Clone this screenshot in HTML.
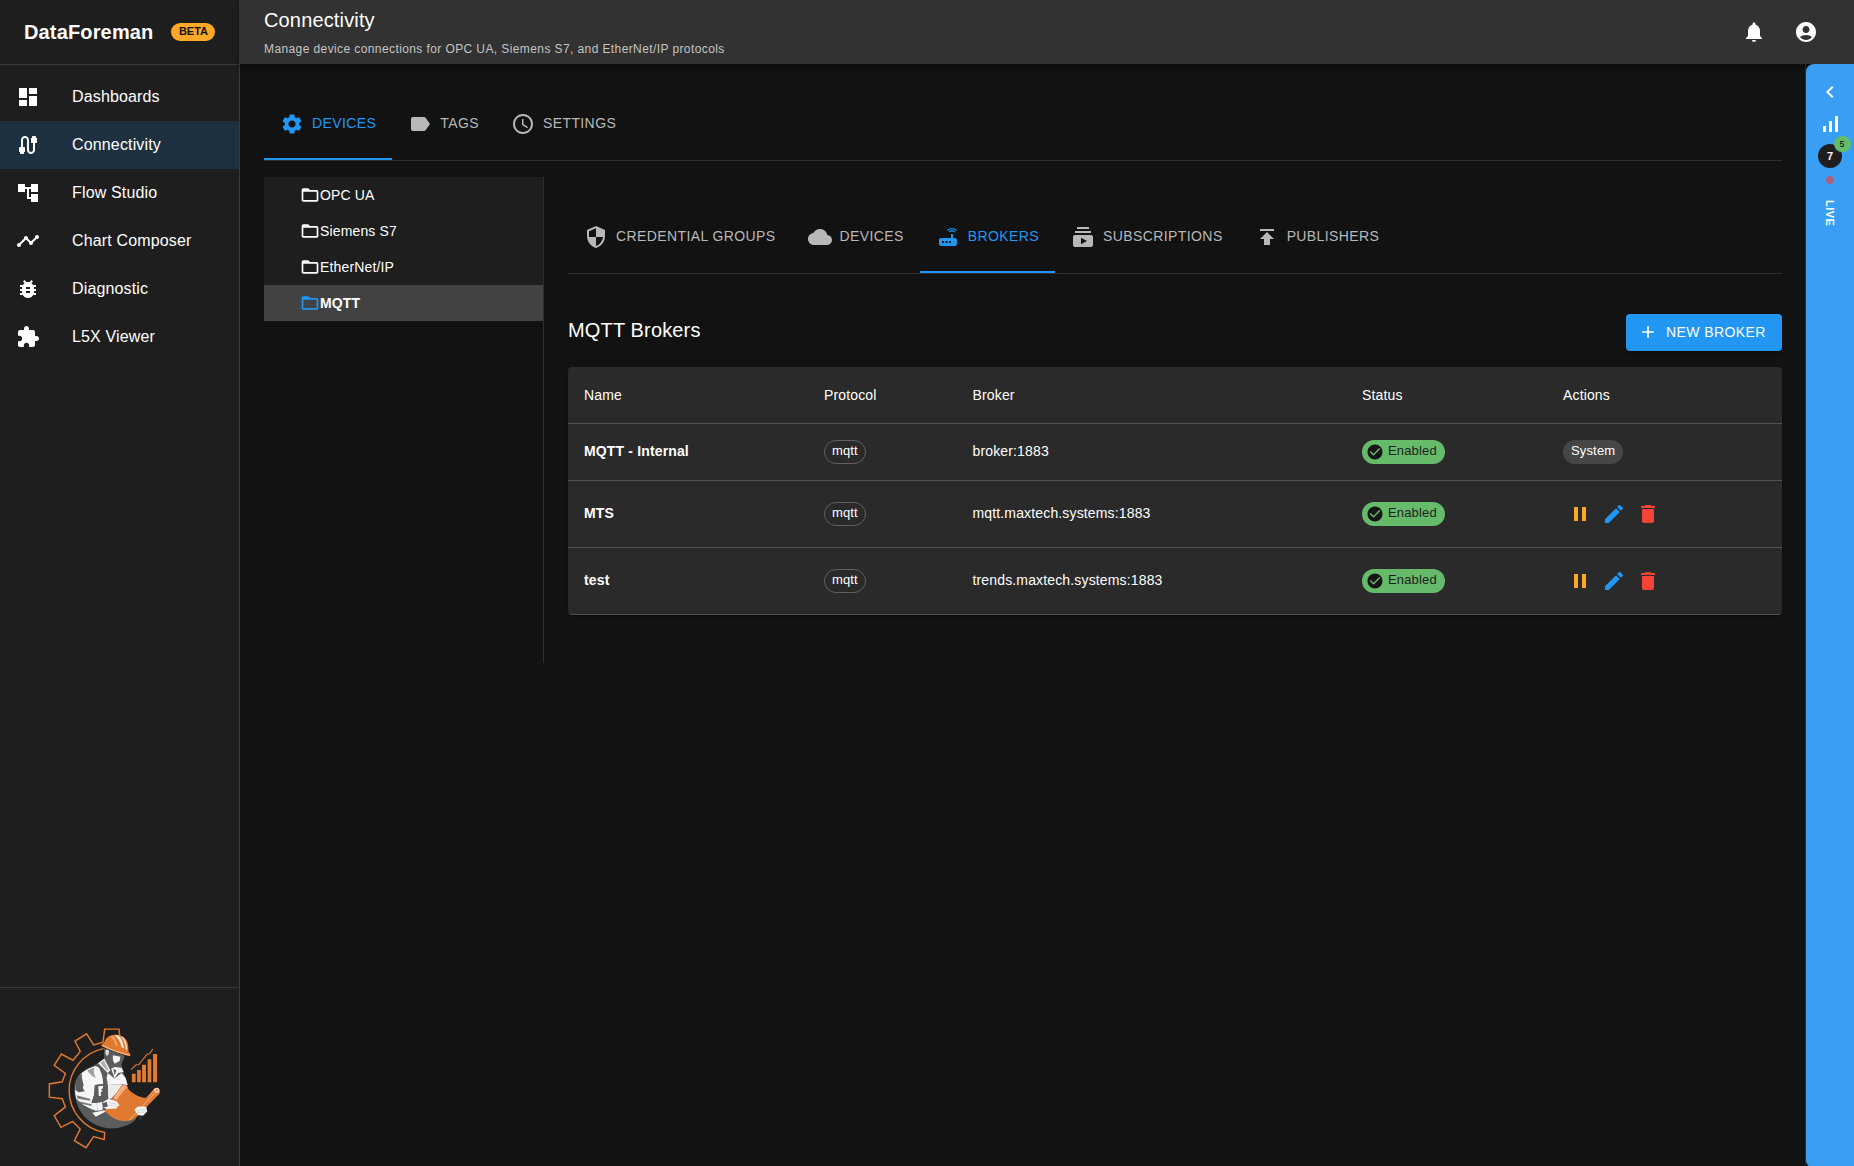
<!DOCTYPE html>
<html><head><meta charset="utf-8">
<style>
*{box-sizing:border-box;margin:0;padding:0}
html,body{width:1854px;height:1166px;overflow:hidden;background:#121212;font-family:"Liberation Sans",sans-serif;color:#fff}
svg{display:block}
.abs{position:absolute}
#side{position:absolute;left:0;top:0;width:240px;height:1166px;background:#1e1e1e;border-right:1px solid #393939}
#side .hdr{position:absolute;left:0;top:0;width:239px;height:65px;border-bottom:1px solid #393939}
#brand{position:absolute;left:24px;top:20px;font-size:20px;font-weight:700;line-height:24px;letter-spacing:0.15px}
#beta{position:absolute;left:171px;top:23px;width:44px;height:18px;border-radius:9px;background:#ffa726;color:#111;font-size:11px;font-weight:700;line-height:16px;text-align:center;padding-left:1px}
.nav{position:absolute;left:0;width:239px;height:48px}
.nav.sel{background:#1e3140}
.nav svg{position:absolute;left:16px;top:12px;width:24px;height:24px;fill:#fff}
.nav span{position:absolute;left:72px;top:12px;font-size:16px;line-height:24px;letter-spacing:0.15px}
#sidefoot{position:absolute;left:0;top:987px;width:239px;height:1px;background:#393939}
#bar{position:absolute;left:240px;top:0;width:1614px;height:64px;background:#323232;box-shadow:0 2px 4px -1px rgba(0,0,0,.2),0 4px 5px 0 rgba(0,0,0,.14),0 1px 10px 0 rgba(0,0,0,.12)}
#bar h1{position:absolute;left:24px;top:8px;font-size:20px;font-weight:400;line-height:24px;letter-spacing:0.15px}
#bar p{position:absolute;left:24px;top:41px;font-size:12px;line-height:16px;color:#c4c4c4;letter-spacing:0.4px}
#bar svg{position:absolute;width:24px;height:24px;fill:#fff}
#live{position:absolute;left:1806px;top:64px;width:48px;height:1104px;background:#399ff4;border-radius:8px 0 0 8px}
#livel{position:absolute;left:1805px;top:64px;width:1px;height:1102px;background:#2c2c2c}
.tab{position:absolute;height:72px;font-size:14px;letter-spacing:0.02857em;color:#b8b8b8;text-transform:uppercase}
.tab svg{position:absolute;width:24px;height:24px;fill:#b8b8b8}
.tab span{position:absolute;white-space:nowrap;line-height:24px}
.tab.on{color:#2196f3}.tab.on svg{fill:#2196f3}
.hr{position:absolute;height:1px;background:#2e2e2e}
.ind{position:absolute;height:2px;background:#2196f3}
#tree{position:absolute;left:264px;top:177px;width:279px;height:144px;background:#1e1e1e}
.ti{position:absolute;left:0;width:279px;height:36px}
.ti.sel{background:#424242;font-weight:700}
.ti svg{position:absolute;left:36px;top:8px;width:20px;height:20px;fill:#fff}
.ti.sel svg{fill:#2196f3}
.ti span{position:absolute;left:56px;top:8px;font-size:14px;line-height:20px;letter-spacing:0.15px}
#vline{position:absolute;left:543px;top:177px;width:1px;height:486px;background:#2e2e2e}
#ttl{position:absolute;left:568px;top:314px;font-size:20px;line-height:32px;letter-spacing:0.15px}
#btn{position:absolute;left:1626px;top:314px;width:156px;height:37px;background:#2196f3;border-radius:4px;box-shadow:0 3px 1px -2px rgba(0,0,0,.2),0 2px 2px 0 rgba(0,0,0,.14),0 1px 5px 0 rgba(0,0,0,.12)}
#btn svg{position:absolute;left:12px;top:8px;width:20px;height:20px;fill:#fff}
#btn span{position:absolute;left:40px;top:7px;font-size:14px;line-height:22px;letter-spacing:0.4px;white-space:nowrap}
#tbl{position:absolute;left:568px;top:367px;width:1214px;height:248px;background:#2a2a2a;border-radius:4px;overflow:hidden;box-shadow:0 2px 1px -1px rgba(0,0,0,.2),0 1px 1px 0 rgba(0,0,0,.14),0 1px 3px 0 rgba(0,0,0,.12)}
.row{position:absolute;left:0;width:1214px;border-bottom:1px solid #515151;font-size:14px;letter-spacing:0.15px}
.row div.c{position:absolute;line-height:20px;white-space:nowrap}
.chip-o{position:absolute;height:24px;border:1px solid #616161;border-radius:12px;font-size:13px;line-height:20px;padding:0 7px}
.chip-g{position:absolute;height:24px;width:83px;border-radius:12px;background:#66bb6a;color:#1e1e1e;font-size:13px;line-height:22px}
.chip-g svg{position:absolute;left:4px;top:3px;width:18px;height:18px;fill:#161616}
.chip-g span{position:absolute;left:26px;top:0}
.chip-s{position:absolute;height:24px;border-radius:12px;background:#464646;font-size:13px;line-height:22px;padding:0 8px}
.act svg{position:absolute;width:24px;height:24px}
</style></head><body>
<div id="side">
 <div class="hdr"></div>
 <div id="brand">DataForeman</div>
 <div id="beta">BETA</div>
 <div class="nav" style="top:73px"><svg viewBox="0 0 24 24"><path d="M3 13h8V3H3v10zm0 8h8v-6H3v6zm10 0h8V11h-8v10zm0-18v6h8V3h-8z"/></svg><span>Dashboards</span></div>
 <div class="nav sel" style="top:121px"><svg viewBox="0 0 24 24"><path d="M20 5V4c0-.55-.45-1-1-1h-2c-.55 0-1 .45-1 1v1h-1v4c0 .55.45 1 1 1h1v7c0 1.1-.9 2-2 2s-2-.9-2-2V7c0-2.21-1.79-4-4-4S5 4.79 5 7v7H4c-.55 0-1 .45-1 1v4h1v1c0 .55.45 1 1 1h2c.55 0 1-.45 1-1v-1h1v-4c0-.55-.45-1-1-1H7V7c0-1.1.9-2 2-2s2 .9 2 2v10c0 2.21 1.79 4 4 4s4-1.79 4-4v-7h1c.55 0 1-.45 1-1V5h-1z"/></svg><span>Connectivity</span></div>
 <div class="nav" style="top:169px"><svg viewBox="0 0 24 24"><path d="M22 11V3h-7v3H9V3H2v8h7V8h2v10h4v3h7v-8h-7v3h-2V8h2v3z"/></svg><span>Flow Studio</span></div>
 <div class="nav" style="top:217px"><svg viewBox="0 0 24 24"><path d="M23 8c0 1.100-.9 2-2 2-.18 0-.35-.02-.51-.07l-3.560 3.550c.05.16.07.34.07.52 0 1.100-.9 2-2 2s-2-.9-2-2c0-.18.02-.36.07-.52l-2.550-2.550c-.16.05-.34.07-.52.07s-.36-.02-.52-.07l-4.550 4.560c.05.16.07.33.07.51 0 1.100-.9 2-2 2s-2-.9-2-2 .9-2 2-2c.18 0 .35.02.51.07l4.560-4.550C8.020 9.360 8 9.180 8 9c0-1.100.9-2 2-2s2 .9 2 2c0 .18-.02.36-.07.52l2.550 2.550c.16-.05.34-.07.52-.07s.36.02.52.07l3.550-3.560C19.020 8.350 19 8.180 19 8c0-1.100.9-2 2-2s2 .9 2 2z"/></svg><span>Chart Composer</span></div>
 <div class="nav" style="top:265px"><svg viewBox="0 0 24 24"><path d="M20 8h-2.810c-.45-.78-1.070-1.450-1.820-1.960L17 4.410 15.590 3l-2.170 2.170C12.960 5.060 12.490 5 12 5c-.49 0-.96.060-1.410.17L8.410 3 7 4.410l1.620 1.630C7.880 6.550 7.260 7.220 6.810 8H4v2h2.090c-.05.33-.09.66-.09 1v1H4v2h2v1c0 .34.04.67.09 1H4v2h2.810c1.040 1.790 2.970 3 5.190 3s4.150-1.210 5.190-3H20v-2h-2.090c.05-.33.09-.66.09-1v-1h2v-2h-2v-1c0-.34-.04-.67-.09-1H20V8zm-6 8h-4v-2h4v2zm0-4h-4v-2h4v2z"/></svg><span>Diagnostic</span></div>
 <div class="nav" style="top:313px"><svg viewBox="0 0 24 24"><path d="M20.500 11H19V7c0-1.100-.9-2-2-2h-4V3.500C13 2.120 11.880 1 10.500 1S8 2.120 8 3.500V5H4c-1.100 0-1.990.9-1.990 2v3.800H3.500c1.490 0 2.700 1.210 2.700 2.700s-1.210 2.700-2.700 2.700H2V20c0 1.100.9 2 2 2h3.800v-1.500c0-1.490 1.210-2.700 2.700-2.700 1.490 0 2.700 1.210 2.700 2.700V22H17c1.100 0 2-.9 2-2v-4h1.500c1.380 0 2.500-1.120 2.500-2.500S21.880 11 20.500 11z"/></svg><span>L5X Viewer</span></div>
 <div id="sidefoot"></div>
 <!--LOGO_S--><svg class="abs" style="left:40px;top:1020px;width:130px;height:136px" viewBox="0 0 1115 1166">
 <path d="M545 245A366 366 0 0 0 555 965L550 1025L460 1000L395 1095L295 1035L345 935L280 870L180 920L122 820L218 745L190 675L80 662L80 548L190 530L218 458L122 388L183 292L283 345L345 270L300 180L400 118L460 213L540 190L555 78L678 78L683 135" fill="none" stroke="#dd7830" stroke-width="12.5" stroke-linejoin="miter"/>
 <g transform="translate(257.3,85.77) scale(0.7358)">
 <!-- gray disc base -->
 <path d="M52 700C50 560 110 500 200 450L330 385L400 330L395 210L640 300L600 400L625 490L670 640L700 800L770 1040C690 1120 560 1150 470 1147C230 1140 55 940 52 700Z" fill="#5b5c5e"/>
 <!-- jacket white areas -->
 <path d="M60 700C62 640 80 590 120 520C160 470 240 440 300 420L340 440L372 500L388 625L290 640L280 760L250 850L310 850L320 940L300 940C200 900 120 860 75 800C62 770 58 730 60 700Z" fill="#f6f6f6"/>
 <path d="M440 500L520 565L600 500L650 560L672 640L600 632L440 642L425 560Z" fill="#f6f6f6"/>
 <path d="M440 642L600 632L640 660L540 740L480 800L445 800Z" fill="#ececec"/>
 <!-- jacket shading -->
 <path d="M72 610C90 560 110 530 140 505C130 560 150 600 160 640C140 660 150 690 175 715L100 725L62 700C62 670 66 640 72 610Z" fill="#5b5c5e"/>
 <path d="M200 470C230 455 260 445 285 440C270 480 280 520 300 560C260 540 230 520 200 470Z" fill="#5b5c5e" opacity=".55"/>
 <path d="M290 640L395 628L440 642L445 800L400 830L370 900L330 850L250 850L280 760Z" fill="#5b5c5e"/>
 <path d="M335 425L378 440L436 600L432 640L396 640L386 560Z" fill="#5b5c5e"/>
 <path d="M330 655L385 650L385 680L360 690L380 710L360 725L362 770L335 770Z" fill="#f6f6f6"/>
 <path d="M75 760L230 800L240 825L90 800Z" fill="#5b5c5e" opacity=".8"/>
 <path d="M100 830L250 865L255 885L130 860Z" fill="#5b5c5e" opacity=".8"/>
 <path d="M310 850L372 840L382 930L322 942Z" fill="#f6f6f6"/>
 <!-- collar -->
 <path d="M328 388L400 332L470 470L440 502Z" fill="#f6f6f6"/>
 <path d="M352 385L395 352L448 462L436 478Z" fill="#5b5c5e" opacity=".45"/>
 <path d="M480 452L520 430L600 440L626 490L562 500L520 562Z" fill="#f6f6f6"/>
 <path d="M505 455L540 470L520 530Z" fill="#5b5c5e"/>
 <!-- face -->
 <path d="M500 295L588 312L578 362L520 392L500 350Z" fill="#f6f6f6"/>
 <path d="M418 232C435 220 455 232 455 255C455 280 440 300 428 300C412 290 408 250 418 232Z" fill="#dcdcdc"/>
 <!-- helmet -->
 <path d="M360 178C385 155 400 142 405 130C420 80 480 50 545 55C620 62 670 110 678 180C682 215 680 240 682 250L708 292C700 306 670 300 640 290C560 270 450 225 372 192Z" fill="#e17a31"/>
 <path d="M520 62C560 90 590 140 602 200L628 212C622 150 600 95 560 62Z" fill="#fdeee2"/>
 <path d="M590 75C625 105 645 160 650 225L668 235C668 170 650 110 612 78Z" fill="#fbdcc6"/>
 <path d="M470 70C500 95 525 140 535 185L555 192C548 140 525 95 495 66Z" fill="#f3a872"/>
 <path d="M385 182C470 225 580 268 700 296" fill="none" stroke="#fbdcc6" stroke-width="9"/>
 <!-- papers -->
 <path d="M500 790L600 650C630 625 670 640 680 690C740 750 820 790 890 790L985 680C1020 660 1060 700 1045 740L780 1010C700 1090 520 1080 405 940Z" fill="#e17a31"/>
 <path d="M508 792L606 660C622 640 650 640 662 660L540 815Z" fill="#f5c09b"/>
 <path d="M530 800L640 655" stroke="#e17a31" stroke-width="7" fill="none"/>
 <path d="M690 1050L1010 715" stroke="#fbdcc6" stroke-width="7" fill="none"/>
 <path d="M895 795L990 690" stroke="#f3a872" stroke-width="10" fill="none"/>
 <circle cx="1012" cy="702" r="30" fill="#f8cfb1"/>
 <circle cx="1012" cy="702" r="12" fill="#e17a31"/>
 <!-- hands -->
 <path d="M380 842L450 800L540 830L576 870L540 916L430 922L376 900Z" fill="#f6f6f6"/>
 <path d="M376 852L430 838L440 890L385 905Z" fill="#5b5c5e"/>
 <path d="M450 840L560 870M440 870L555 895" stroke="#b0b0b0" stroke-width="6" fill="none"/>
 <path d="M260 965L400 935L412 952L300 1012Z" fill="#f6f6f6"/>
 <path d="M750 930L790 890L890 895L900 950L850 1000L790 990Z" fill="#f6f6f6"/>
 <path d="M775 935L880 925M785 960L885 955" stroke="#b0b0b0" stroke-width="6" fill="none"/>
 <path d="M785 1005L845 1010L820 1045Z" fill="#333"/>
 <!-- chart -->
 <path d="M722 510h43v98h-43zM782 465h43v143h-43zM840 405h46v203h-46zM905 340h43v268h-43zM968 278h47v330h-47z" fill="#e17a31"/>
 <path d="M712 462L770 405L800 405L900 280L925 280L965 222" fill="none" stroke="#dd7830" stroke-width="13"/>
 </g>
</svg>
<!--LOGO_E-->
</div>
<div id="bar">
 <h1>Connectivity</h1>
 <p>Manage device connections for OPC UA, Siemens S7, and EtherNet/IP protocols</p>
 <svg style="left:1502px;top:20px" viewBox="0 0 24 24"><path d="M12 22c1.100 0 2-.9 2-2h-4c0 1.100.890 2 2 2zm6-6v-5c0-3.070-1.640-5.640-4.500-6.320V4c0-.830-.670-1.500-1.500-1.500s-1.500.670-1.500 1.500v.680C7.630 5.360 6 7.920 6 11v5l-2 2v1h16v-1l-2-2z"/></svg>
 <svg style="left:1554px;top:20px" viewBox="0 0 24 24"><path d="M12 2C6.480 2 2 6.480 2 12s4.480 10 10 10 10-4.480 10-10S17.520 2 12 2zm0 4c1.930 0 3.500 1.570 3.500 3.500S13.930 13 12 13s-3.500-1.570-3.500-3.500S10.070 6 12 6zm0 14c-2.030 0-4.430-.82-6.140-2.880C7.550 15.800 9.680 15 12 15s4.450.8 6.140 2.120C16.430 19.180 14.030 20 12 20z"/></svg>
</div>
<div id="livel"></div>
<div id="live">
 <svg class="abs" style="left:12px;top:16px;width:24px;height:24px;fill:#fff" viewBox="0 0 24 24"><path d="M15.410 7.410L14 6l-6 6 6 6 1.410-1.410L10.830 12z"/></svg>
 <svg class="abs" style="left:12px;top:48px;width:24px;height:24px;fill:#fff" viewBox="0 0 24 24"><path d="M17 4h3v16h-3zM5 14h3v6H5zm6-5h3v11h-3z"/></svg>
 <div class="abs" style="left:12px;top:80px;width:24px;height:24px;border-radius:12px;background:#1e1e1e;font-size:11px;font-weight:700;line-height:24px;text-align:center">7</div>
 <div class="abs" style="left:28px;top:72px;width:17px;height:16px;border-radius:8px;background:#66bb6a;color:#0a0a0a;font-size:9px;line-height:16px;text-align:center;padding-right:1px">5</div>
 <div class="abs" style="left:20px;top:112px;width:8px;height:8px;border-radius:4px;background:#b0607a"></div>
 <div class="abs" style="left:14px;top:136px;width:20px;height:28px;font-size:11px;font-weight:700;letter-spacing:0.5px;writing-mode:vertical-rl;line-height:20px;white-space:nowrap">LIVE</div>
</div>
<!-- top tabs -->
<div class="tab on" style="left:264px;top:88px;width:128px"><svg style="left:16px;top:24px" viewBox="0 0 24 24"><path d="M19.140 12.940c.04-.3.06-.61.06-.94 0-.32-.02-.64-.07-.94l2.030-1.580c.18-.14.23-.41.12-.61l-1.920-3.320c-.12-.22-.37-.29-.59-.22l-2.390.96c-.5-.38-1.030-.7-1.620-.94l-.36-2.540c-.04-.24-.24-.41-.48-.41h-3.840c-.24 0-.43.17-.47.41l-.36 2.540c-.59.24-1.130.57-1.620.94l-2.390-.96c-.22-.08-.47 0-.59.22L2.740 8.870c-.12.21-.08.47.12.61l2.030 1.580c-.05.3-.09.63-.09.94s.02.640.07.94l-2.030 1.580c-.18.14-.23.41-.12.61l1.920 3.320c.12.22.37.29.59.22l2.390-.96c.5.38 1.030.7 1.620.94l.36 2.540c.05.24.24.41.48.41h3.840c.24 0 .44-.17.47-.41l.36-2.540c.59-.24 1.130-.56 1.620-.94l2.390.96c.22.08.47 0 .59-.22l1.920-3.320c.12-.22.07-.47-.12-.61l-2.010-1.580zM12 15.600c-1.980 0-3.600-1.620-3.600-3.600s1.620-3.600 3.600-3.600 3.600 1.620 3.600 3.600-1.620 3.600-3.600 3.600z"/></svg><span style="left:48px;top:23px">Devices</span></div>
<div class="tab" style="left:392.27px;top:88px;width:102.69px"><svg style="left:16px;top:24px" viewBox="0 0 24 24"><path d="M17.630 5.840C17.270 5.330 16.670 5 16 5L5 5.010C3.900 5.010 3 5.900 3 7v10c0 1.100.9 1.990 2 1.990L16 19c.67 0 1.270-.33 1.630-.84L22 12l-4.370-6.160z"/></svg><span style="left:48px;top:23px">Tags</span></div>
<div class="tab" style="left:494.96px;top:88px;width:137px"><svg style="left:16px;top:24px" viewBox="0 0 24 24"><path d="M11.990 2C6.470 2 2 6.480 2 12s4.470 10 9.990 10C17.520 22 22 17.520 22 12S17.520 2 11.990 2zM12 20c-4.420 0-8-3.580-8-8s3.580-8 8-8 8 3.580 8 8-3.580 8-8 8zm.5-13H11v6l5.250 3.150.75-1.230-4.500-2.670z"/></svg><span style="left:48px;top:23px">Settings</span></div>
<div class="hr" style="left:264px;top:160px;width:1518px"></div>
<div class="ind" style="left:264px;top:158px;width:128px"></div>
<!-- tree -->
<div id="tree">
 <div class="ti" style="top:0"><svg viewBox="0 0 24 24"><path d="M20 6h-8l-2-2H4c-1.100 0-1.990.9-1.990 2L2 18c0 1.100.9 2 2 2h16c1.100 0 2-.9 2-2V8c0-1.100-.9-2-2-2zm0 12H4V8h16v10z"/></svg><span>OPC UA</span></div>
 <div class="ti" style="top:36px"><svg viewBox="0 0 24 24"><path d="M20 6h-8l-2-2H4c-1.100 0-1.990.9-1.990 2L2 18c0 1.100.9 2 2 2h16c1.100 0 2-.9 2-2V8c0-1.100-.9-2-2-2zm0 12H4V8h16v10z"/></svg><span>Siemens S7</span></div>
 <div class="ti" style="top:72px"><svg viewBox="0 0 24 24"><path d="M20 6h-8l-2-2H4c-1.100 0-1.990.9-1.990 2L2 18c0 1.100.9 2 2 2h16c1.100 0 2-.9 2-2V8c0-1.100-.9-2-2-2zm0 12H4V8h16v10z"/></svg><span>EtherNet/IP</span></div>
 <div class="ti sel" style="top:108px"><svg viewBox="0 0 24 24"><path d="M20 6h-8l-2-2H4c-1.100 0-1.990.9-1.990 2L2 18c0 1.100.9 2 2 2h16c1.100 0 2-.9 2-2V8c0-1.100-.9-2-2-2zm0 12H4V8h16v10z"/></svg><span>MQTT</span></div>
</div>
<div id="vline"></div>
<div class="tab" style="left:568px;top:200px;width:224px"><svg style="left:16px;top:25px" viewBox="0 0 24 24"><path d="M12 1L3 5v6c0 5.550 3.840 10.740 9 12 5.160-1.260 9-6.450 9-12V5l-9-4zm0 10.990h7c-.530 4.120-3.280 7.790-7 8.940V12H5V6.300l7-3.110v8.800z"/></svg><span style="left:48px;top:24px">Credential Groups</span></div>
<div class="tab" style="left:791.53px;top:200px;width:128.27px"><svg style="left:16px;top:25px" viewBox="0 0 24 24"><path d="M19.350 10.040C18.670 6.590 15.640 4 12 4 9.110 4 6.600 5.640 5.350 8.040 2.340 8.360 0 10.910 0 14c0 3.310 2.690 6 6 6h13c2.760 0 5-2.240 5-5 0-2.640-2.050-4.780-4.650-4.960z"/></svg><span style="left:48px;top:24px">Devices</span></div>
<div class="tab on" style="left:919.8px;top:200px;width:135.27px"><svg style="left:16px;top:25px" viewBox="0 0 24 24"><path d="M20.200 5.900l.8-.8C19.600 3.700 17.800 3 16 3s-3.600.7-5 2.100l.8.8C13 4.800 14.500 4.200 16 4.200s3 .6 4.200 1.700zm-.9.8c-.9-.9-2.100-1.400-3.300-1.400s-2.400.5-3.300 1.400l.8.8c.7-.7 1.600-1 2.500-1 .9 0 1.800.3 2.500 1l.8-.8zM19 13h-2V9h-2v4H5c-1.100 0-2 .9-2 2v4c0 1.100.9 2 2 2h14c1.100 0 2-.9 2-2v-4c0-1.100-.9-2-2-2zM8 18H6v-2h2v2zm3.500 0h-2v-2h2v2zm3.500 0h-2v-2h2v2z"/></svg><span style="left:48px;top:24px">Brokers</span></div>
<div class="tab" style="left:1055.07px;top:200px;width:183.56px"><svg style="left:16px;top:25px" viewBox="0 0 24 24"><path d="M20 8H4V6h16v2zm-2-6H6v2h12V2zm4 10v8c0 1.100-.9 2-2 2H4c-1.100 0-2-.9-2-2v-8c0-1.100.9-2 2-2h16c1.100 0 2 .9 2 2zm-6 4l-6-3.270v6.530L16 16z"/></svg><span style="left:48px;top:24px">Subscriptions</span></div>
<div class="tab" style="left:1238.63px;top:200px;width:156.7px"><svg style="left:16px;top:25px" viewBox="0 0 24 24"><path d="M5 4v2h14V4H5zm0 10h4v6h6v-6h4l-7-7-7 7z"/></svg><span style="left:48px;top:24px">Publishers</span></div>
<div class="hr" style="left:568px;top:273px;width:1214px"></div>
<div class="ind" style="left:920px;top:271px;width:135px"></div>

<div id="ttl">MQTT Brokers</div>
<div id="btn"><svg viewBox="0 0 24 24"><path d="M19 13h-6v6h-2v-6H5v-2h6V5h2v6h6v2z"/></svg><span>NEW BROKER</span></div>
<div id="tbl">
<div class="row" style="top:0;height:57px"><div class="c" style="left:16px;top:18px">Name</div><div class="c" style="left:256px;top:18px">Protocol</div><div class="c" style="left:404.5px;top:18px">Broker</div><div class="c" style="left:794px;top:18px">Status</div><div class="c" style="left:995px;top:18px">Actions</div></div>
<div class="row" style="top:57px;height:57px"><div class="c" style="left:16px;top:17px;font-weight:700">MQTT - Internal</div><div class="chip-o" style="left:256px;top:16px">mqtt</div><div class="c" style="left:404.5px;top:17px">broker:1883</div><div class="chip-g" style="left:794px;top:16px"><svg viewBox="0 0 24 24"><path d="M12 2C6.480 2 2 6.480 2 12s4.480 10 10 10 10-4.480 10-10S17.520 2 12 2zm-2 15l-5-5 1.410-1.410L10 14.170l7.590-7.590L19 8l-9 9z"/></svg><span>Enabled</span></div><div class="chip-s" style="left:995px;top:16px">System</div></div>
<div class="row" style="top:114px;height:67px"><div class="c" style="left:16px;top:22px;font-weight:700">MTS</div><div class="chip-o" style="left:256px;top:21px">mqtt</div><div class="c" style="left:404.5px;top:22px">mqtt.maxtech.systems:1883</div><div class="chip-g" style="left:794px;top:21px"><svg viewBox="0 0 24 24"><path d="M12 2C6.480 2 2 6.480 2 12s4.480 10 10 10 10-4.480 10-10S17.520 2 12 2zm-2 15l-5-5 1.410-1.410L10 14.170l7.590-7.590L19 8l-9 9z"/></svg><span>Enabled</span></div><div class="act"><svg style="left:1000px;top:21px;fill:#ffa726" viewBox="0 0 24 24"><path d="M6 19h4V5H6v14zm8-14v14h4V5h-4z"/></svg><svg style="left:1034px;top:21px;fill:#2196f3" viewBox="0 0 24 24"><path d="M3 17.250V21h3.750L17.810 9.940l-3.750-3.750L3 17.250zM20.710 7.040c.39-.39.39-1.020 0-1.410l-2.340-2.340c-.39-.39-1.020-.39-1.410 0l-1.830 1.830 3.750 3.750 1.830-1.830z"/></svg><svg style="left:1068px;top:21px;fill:#f44336" viewBox="0 0 24 24"><path d="M6 19c0 1.100.9 2 2 2h8c1.100 0 2-.9 2-2V7H6v12zM19 4h-3.500l-1-1h-5l-1 1H5v2h14V4z"/></svg></div></div>
<div class="row" style="top:181px;height:67px"><div class="c" style="left:16px;top:22px;font-weight:700">test</div><div class="chip-o" style="left:256px;top:21px">mqtt</div><div class="c" style="left:404.5px;top:22px">trends.maxtech.systems:1883</div><div class="chip-g" style="left:794px;top:21px"><svg viewBox="0 0 24 24"><path d="M12 2C6.480 2 2 6.480 2 12s4.480 10 10 10 10-4.480 10-10S17.520 2 12 2zm-2 15l-5-5 1.410-1.410L10 14.170l7.590-7.590L19 8l-9 9z"/></svg><span>Enabled</span></div><div class="act"><svg style="left:1000px;top:21px;fill:#ffa726" viewBox="0 0 24 24"><path d="M6 19h4V5H6v14zm8-14v14h4V5h-4z"/></svg><svg style="left:1034px;top:21px;fill:#2196f3" viewBox="0 0 24 24"><path d="M3 17.250V21h3.750L17.810 9.940l-3.750-3.750L3 17.250zM20.710 7.040c.39-.39.39-1.020 0-1.410l-2.340-2.340c-.39-.39-1.020-.39-1.410 0l-1.830 1.830 3.750 3.750 1.830-1.830z"/></svg><svg style="left:1068px;top:21px;fill:#f44336" viewBox="0 0 24 24"><path d="M6 19c0 1.100.9 2 2 2h8c1.100 0 2-.9 2-2V7H6v12zM19 4h-3.500l-1-1h-5l-1 1H5v2h14V4z"/></svg></div></div>
</div>

</body></html>
